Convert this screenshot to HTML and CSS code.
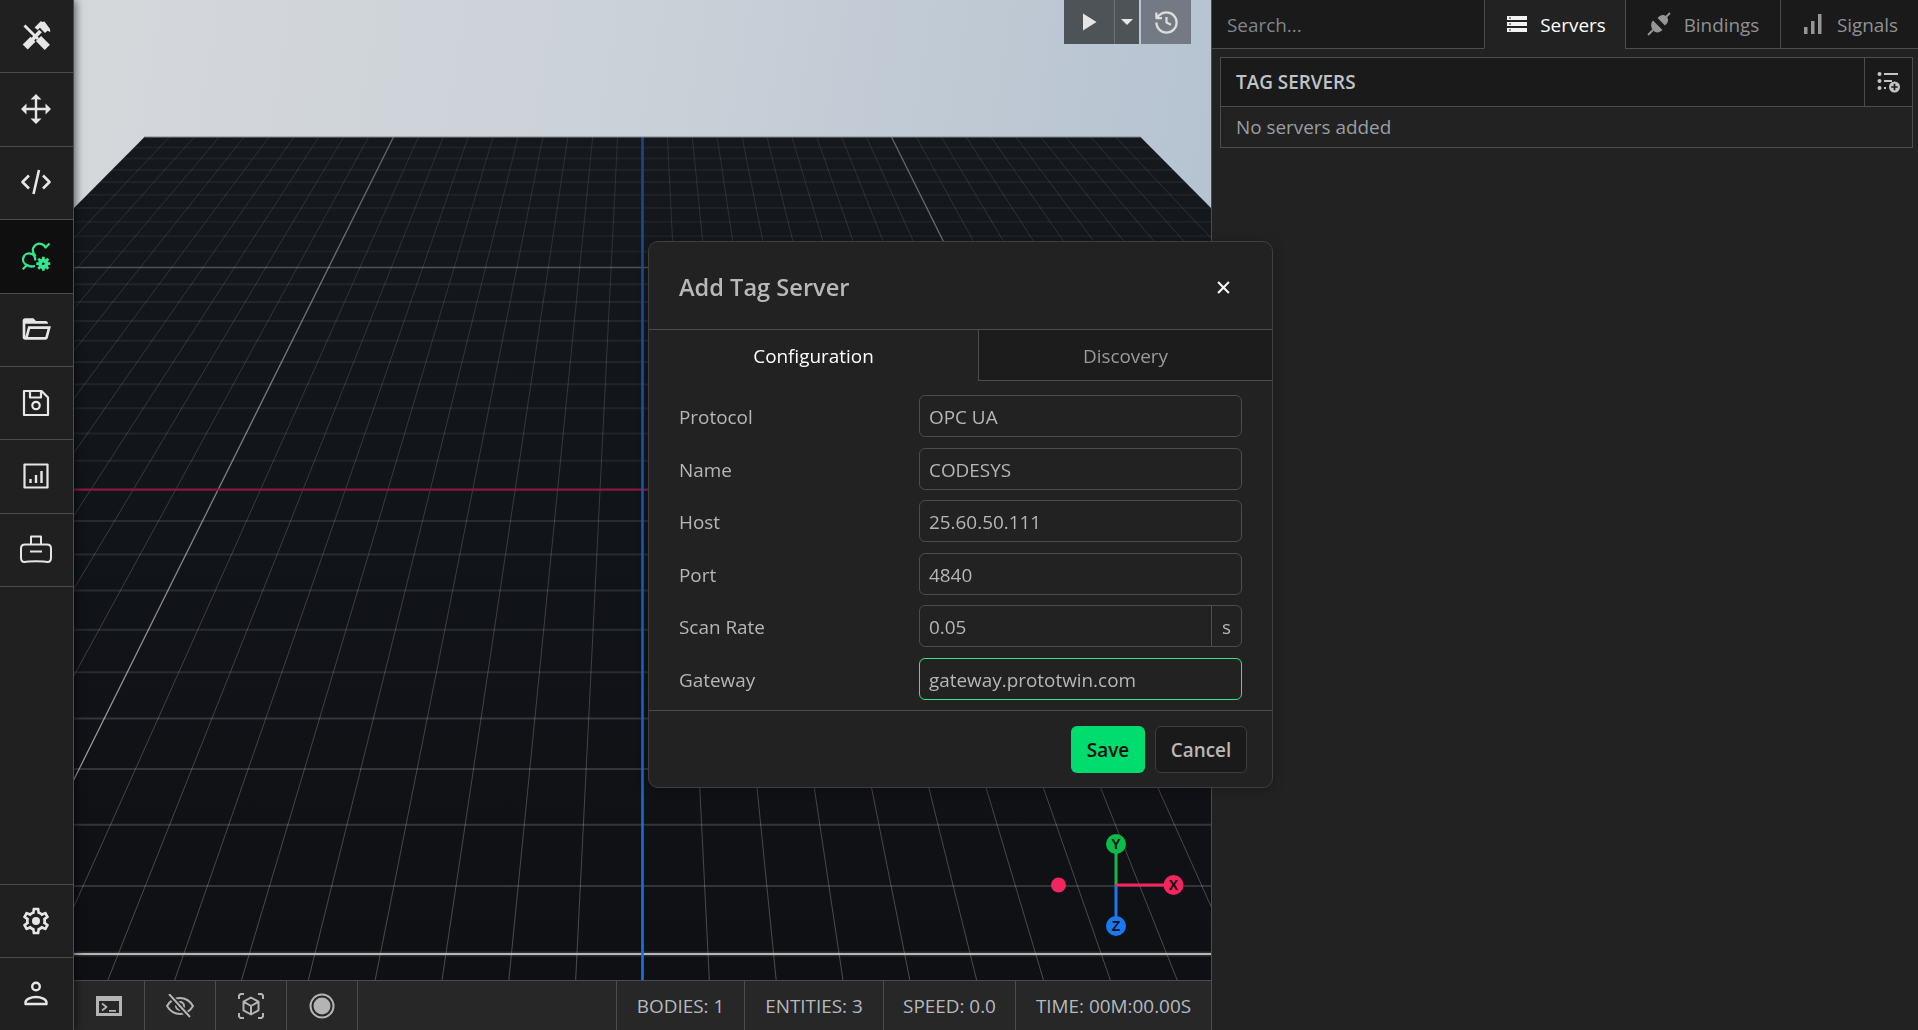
FILE: index.html
```html
<!DOCTYPE html>
<html lang="en">
<head>
<meta charset="utf-8">
<title>Add Tag Server</title>
<link rel="stylesheet" href="styles.css">
</head>
<body>
<div class="app">
  <nav class="sidebar">
    <div class="side-group">
      <div class="side-item"><svg class="ico" viewBox="0 0 32 32"><path class="st" d="M4.500 5.500 18 19" stroke-width="2.800"/><path class="st" d="m18.500 18.500 8.800 8.800" stroke-width="7.400"/><path class="st" d="m5.200 27 7.800-7.800" stroke-width="7"/><path class="st" d="m12 20 8.500-9" stroke-width="3.800"/><path class="fl" d="m14.500 7.500 6.500-6.500 1 1 2.500-.5 5.500 7.500.3 3-2.800-1.200-2.500 2.200-3.500-3.500-1.500-1.700L17.500 10z"/></svg></div>
      <div class="side-item"><svg class="ico" viewBox="0 0 32 32"><path class="st" d="M16 3v26M3 16h26" stroke-width="2.400"/><path class="fl" d="m16 1 5.500 5.500h-3.500l-2-1-2 1h-3.500zM16 31l5.500-5.500h-3.500l-2 1-2-1h-3.500zM1 16l5.500-5.500v3.500l-1 2 1 2v3.500zM31 16l-5.500-5.500v3.500l1 2-1 2v3.500z"/></svg></div>
      <div class="side-item"><svg class="ico" viewBox="0 0 32 32"><path class="st" d="M9 9.500 2.500 16 9 22.500M23 9.500 29.500 16 23 22.500M19 4 13.500 28" stroke-width="2.600"/></svg></div>
      <div class="side-item active"><svg class="ico" viewBox="0 0 32 32"><path class="st" d="M29.500 3.500 25.500 7.500A6.600 6.600 0 0 0 13.500 13L15.500 16.500M2.700 29.300 7 25A6 6 0 1 1 15 20.500M7 25c2 1.500 5 1.800 8 1" stroke-width="2.300"/><circle class="fl" cx="23.300" cy="23.700" r="5.200"/><path class="st" d="M23.300 16.700v14M16.300 23.700h14M18.300 18.700l10 10M28.300 18.700l-10 10" stroke-width="2.800"/><circle class="hole" cx="23.300" cy="23.700" r="1.300"/></svg></div>
      <div class="side-item"><svg class="ico" viewBox="0 0 24 24"><path class="fl" d="M6.100 10 4 18V8h17a2 2 0 0 0-2-2h-7l-2-2H4a2 2 0 0 0-2 2v12a2 2 0 0 0 2 2h15c.9 0 1.700-.6 1.900-1.500L23.200 10H6.100M19 18H6l1.600-6h13L19 18z"/></svg></div>
      <div class="side-item"><svg class="ico" viewBox="0 0 32 32"><path class="st" d="M4 4h17.500L28 10.500V28H4zM10 4.500v6h11v-6" stroke-width="2.200"/><circle class="st" cx="16" cy="18.500" r="3.700" stroke-width="2.200"/></svg></div>
      <div class="side-item"><svg class="ico" viewBox="0 0 32 32"><path class="st" d="M4.500 4.500h23v23h-23z" stroke-width="2.200"/><path class="st" d="M10.500 19v4M16 15v8M21.500 11v12" stroke-width="2.400"/></svg></div>
      <div class="side-item"><svg class="ico" viewBox="0 0 32 32"><path class="st" d="M11 11V3.500h10V11M5 11.500h22c2.500 0 4 1.500 4 4v9c0 3-1.500 4.500-3.500 4.500-3.500-1-19.500-1-23 0C2.500 29 1 27.500 1 24.500v-9c0-2.500 1.500-4 4-4zM10 18.500h12" stroke-width="2"/></svg></div>
    </div>
    <div class="side-group">
      <div class="side-item first"><svg class="ico" viewBox="0 0 24 24"><path class="fl" d="M10 22c-.25 0-.46-.18-.5-.42l-.37-2.650c-.63-.25-1.170-.59-1.690-.99l-2.490 1.010c-.22.08-.49 0-.61-.22l-2-3.460c-.13-.22-.07-.49.12-.64L4.570 12.970 4.500 12l.07-1-2.110-1.630c-.19-.15-.25-.42-.12-.64l2-3.460c.12-.22.39-.31.61-.22l2.490 1c.52-.39 1.060-.73 1.690-.98L9.500 2.420c.04-.24.25-.42.5-.42h4c.25 0 .46.18.5.42l.37 2.650c.63.25 1.170.59 1.690.98l2.490-1c.22-.09.49 0 .61.22l2 3.460c.13.22.07.49-.12.64L19.430 11l.07 1-.07 1 2.110 1.630c.19.15.25.42.12.64l-2 3.460c-.12.22-.39.31-.61.22l-2.490-1c-.52.39-1.060.73-1.690.98l-.37 2.650c-.04.24-.25.42-.5.42h-4M11.250 4l-.37 2.610c-1.200.25-2.260.89-3.030 1.780L5.440 7.350l-.75 1.300L6.800 10.200c-.4 1.170-.4 2.440 0 3.600l-2.120 1.560.75 1.300 2.430-1.040c.77.880 1.820 1.520 3.010 1.760l.37 2.620h1.520l.37-2.610c1.190-.25 2.240-.89 3.010-1.770l2.430 1.040.75-1.300-2.120-1.550c.4-1.170.4-2.440 0-3.610l2.110-1.550-.75-1.300-2.410 1.040c-.77-.89-1.830-1.530-3.030-1.770L12.750 4h-1.500z"/><circle class="fl" cx="12" cy="12" r="3"/></svg></div>
      <div class="side-item last"><svg class="ico" viewBox="0 0 32 32"><circle class="st" cx="16" cy="8.500" r="3.800" stroke-width="2.400"/><path class="st" d="M5.500 24.500c0-3 5-5.500 10.500-5.500s10.500 2.500 10.500 5.500v1.500h-21z" stroke-width="2.400"/></svg></div>
    </div>
  </nav>

  <main class="stage">
    <div class="viewport">
      <svg class="scene" viewBox="74 0 1137 980" preserveAspectRatio="none">
        <defs>
          <linearGradient id="floorFill" gradientUnits="userSpaceOnUse" x1="0" y1="137" x2="0" y2="980">
            <stop offset="0" stop-color="#15191e"/><stop offset=".45" stop-color="#111419"/><stop offset="1" stop-color="#0f1014"/>
          </linearGradient>
          <linearGradient id="minorV" gradientUnits="userSpaceOnUse" x1="0" y1="137" x2="0" y2="980">
            <stop offset="0" stop-color="#fff" stop-opacity=".09"/><stop offset="1" stop-color="#fff" stop-opacity=".25"/>
          </linearGradient>
          <linearGradient id="majorV" gradientUnits="userSpaceOnUse" x1="0" y1="137" x2="0" y2="980">
            <stop offset="0" stop-color="#fff" stop-opacity=".32"/><stop offset="1" stop-color="#fff" stop-opacity=".65"/>
          </linearGradient>
          <linearGradient id="blueAxis" gradientUnits="userSpaceOnUse" x1="0" y1="137" x2="0" y2="980">
            <stop offset="0" stop-color="#1a4684"/><stop offset="1" stop-color="#1a72ea"/>
          </linearGradient>
          <clipPath id="floorClip"><polygon points="144.500,137 1140.500,137 1979,980 -694,980"/></clipPath>
        </defs>
        <polygon points="144.500,137 1140.500,137 1979,980 -694,980" fill="url(#floorFill)"/>
        <g clip-path="url(#floorClip)" fill="none">
          <path stroke="#fff" stroke-opacity=".045" stroke-width="2" d="M74 147.600H1211M74 158.600H1211M74 170.100H1211M74 182.100H1211M74 194.700H1211M74 207.900H1211M74 221.700H1211M74 236.200H1211M74 251.400H1211"/>
          <path stroke="#fff" stroke-opacity=".065" stroke-width="2" d="M74 284.300H1211M74 302.100H1211M74 320.900H1211M74 340.800H1211M74 361.900H1211M74 384.300H1211M74 408.200H1211M74 433.600H1211M74 460.700H1211"/>
          <path stroke="#fff" stroke-opacity=".1" stroke-width="2" d="M74 520.900H1211M74 554.400H1211M74 590.600H1211M74 629.700H1211M74 672.200H1211"/>
          <path stroke="#fff" stroke-opacity=".15" stroke-width="2" d="M74 718.500H1211M74 769.100H1211M74 824.700H1211M74 886H1211"/>
          <path stroke="url(#minorV)" stroke-width="1" d="M617.600 137 575.670 980M592.700 137 508.840 980M567.800 137 442.010 980M542.900 137 375.180 980M518 137 308.350 980M493.100 137 241.520 980M468.200 137 174.690 980M443.300 137 107.860 980M418.400 137 41.030 980M368.600 137-92.630 980M343.700 137-159.460 980M318.800 137-226.290 980M293.900 137-293.120 980M269 137-359.950 980M244.100 137-426.780 980M219.200 137-493.610 980M194.300 137-560.440 980M169.400 137-627.270 980M667.400 137 709.330 980M692.300 137 776.160 980M717.200 137 842.990 980M742.100 137 909.820 980M767 137 976.650 980M791.900 137 1043.480 980M816.800 137 1110.310 980M841.700 137 1177.140 980M866.600 137 1243.970 980M916.400 137 1377.630 980M941.300 137 1444.460 980M966.200 137 1511.290 980M991.100 137 1578.120 980M1016 137 1644.950 980M1040.900 137 1711.780 980M1065.800 137 1778.610 980M1090.700 137 1845.440 980M1115.600 137 1912.270 980"/>
          <path stroke="url(#majorV)" stroke-width="1.300" d="M393.500 137-25.800 980M891.500 137 1310.800 980"/>
          <path stroke="#fff" stroke-opacity=".25" stroke-width="1.500" d="M74 267.400H1211"/>
          <path stroke="#88193c" stroke-width="2.200" d="M74 489.700H1211"/>
          <path stroke="#fff" stroke-opacity=".12" stroke-width="5" d="M74 954H1211"/>
          <path stroke="#b6b6b6" stroke-width="2" d="M74 954H1211"/>
          <path stroke="url(#blueAxis)" stroke-width="2.600" d="M642.500 137V980"/>
        </g>
        <path class="horizon" d="M144.500 137H1140.500"/>
        <g class="gizmo">
          <path class="gz-g" d="M1116 844V885"/>
          <path class="gz-b" d="M1116 885V926"/>
          <path class="gz-r" d="M1116 885H1173"/>
          <circle class="gz-rf" cx="1058.500" cy="885" r="7.500"/>
          <circle class="gz-gf" cx="1116" cy="844" r="10"/>
          <circle class="gz-rf" cx="1173.500" cy="885" r="10"/>
          <circle class="gz-bf" cx="1116" cy="926" r="10"/>
          <text x="1116" y="849">Y</text>
          <text x="1173.500" y="890">X</text>
          <text x="1116" y="931">Z</text>
        </g>
      </svg>
      <div class="run-controls">
        <div class="run-group">
          <button class="run-play"><svg viewBox="0 0 20 20" width="20" height="20"><path class="fl" d="M4 1.500 17.500 10 4 18.500z"/></svg></button>
          <button class="run-menu"><svg viewBox="0 0 14 8" width="14" height="8"><path class="fl" d="M1 1h12L7 7z"/></svg></button>
        </div>
        <button class="run-history"><svg viewBox="0 0 24 24" width="27" height="27"><path class="st" stroke-width="2" d="M3 12a9 9 0 1 0 9-9 9.750 9.750 0 0 0-6.740 2.740L3 8M3 3v5h5M12 7v5l4 2"/></svg></button>
      </div>
    </div>

    <footer class="statusbar">
      <div class="tool"><svg viewBox="0 0 26 20" width="26" height="20"><path class="tfill" d="M0 0h26v20H0zM3 5v12h20V5z" fill-rule="evenodd"/><path class="st" stroke-width="1.800" d="m6 7.500 4.500 3.500L6 14.500M13 14.800h7"/></svg></div>
      <div class="tool"><svg viewBox="0 0 28 24" width="28" height="24"><path class="st" stroke-width="2" d="M1 12c3-5 8-8 13-8s10 3 13 8c-3 5-8 8-13 8s-10-3-13-8z"/><circle class="st" stroke-width="2" cx="14" cy="12" r="4"/><path class="cut" d="M3 0 24 24"/><path class="st" stroke-width="2" d="M3 0 24 23"/></svg></div>
      <div class="tool"><svg viewBox="0 0 26 26" width="26" height="26"><path class="st" stroke-width="2" d="M1 6V2.500L2.500 1H6M20 1h3.500L25 2.500V6M25 20v3.500L23.500 25H20M6 25H2.500L1 23.500V20M13 4.500l7.500 4.200v8.600L13 21.500l-7.500-4.200V8.700zM5.500 8.700 13 13l7.500-4.300M13 13v8.500"/></svg></div>
      <div class="tool"><svg viewBox="0 0 26 26" width="26" height="26"><circle class="st" stroke-width="2" cx="13" cy="13" r="11.500"/><circle class="fl" cx="13" cy="13" r="8.500"/></svg></div>
      <div class="tool-rest"></div>
      <div class="stat stat-a">BODIES: 1</div>
      <div class="stat stat-b">ENTITIES: 3</div>
      <div class="stat stat-c">SPEED: 0.0</div>
      <div class="stat stat-d">TIME: 00M:00.00S</div>
    </footer>
  </main>

  <aside class="panel">
    <div class="panel-top">
      <input class="search" type="text" placeholder="Search...">
      <div class="ptab ptab-servers on"><svg viewBox="0 0 20 16" width="20" height="16"><path class="fl" d="M0 0h20v4H0zM0 6h20v4H0zM0 12h20v4H0z"/><path class="dots" d="M2 1.500h2v1H2zM2 7.500h2v1H2zM2 13.500h2v1H2z"/></svg><span>Servers</span></div>
      <div class="ptab ptab-bindings"><svg viewBox="0 0 24 24" width="24" height="24"><path class="fl" d="m6 8.500 9.500 9.500c-3 3-6.500 3.200-9 .8S3 11.500 6 8.500zM10.500 6c3-3.500 6.500-3.800 9-1.500s2 6-1.500 9z"/><path class="st" stroke-width="1.800" d="m1 23 5-5M18 6l5-5"/></svg><span>Bindings</span></div>
      <div class="ptab ptab-signals"><svg viewBox="0 0 18 20" width="18" height="20"><path class="fl" d="M0 13h3.500v7H0zM7 7h3.500v13H7zM14 0h3.500v20H14z"/></svg><span>Signals</span></div>
    </div>
    <section class="servers">
      <header class="servers-head">
        <h2>TAG SERVERS</h2>
        <div class="servers-add"><svg viewBox="0 0 24 22" width="24" height="22"><circle class="fl" cx="2.500" cy="3" r="2"/><circle class="fl" cx="2.500" cy="10" r="2"/><circle class="fl" cx="2.500" cy="17" r="2"/><path class="st" stroke-width="2" d="M7 3h14M7 10h8M7 17h2"/><circle class="fl" cx="17.500" cy="16" r="5.500"/><path class="plus" d="M17.500 12.800v6.400M14.300 16h6.400"/></svg></div>
      </header>
      <div class="servers-empty">No servers added</div>
    </section>
  </aside>
</div>

<div class="overlay">
  <div class="dialog">
    <header class="dialog-head">
      <h1>Add Tag Server</h1>
      <svg class="dialog-close" viewBox="0 0 12 12" width="13" height="13"><path d="M1 1l10 10M11 1 1 11"/></svg>
    </header>
    <div class="dialog-tabs">
      <div class="dtab dtab-on">Configuration</div>
      <div class="dtab dtab-off">Discovery</div>
    </div>
    <form class="dialog-body">
      <label class="field"><span class="lbl">Protocol</span><input class="inp" value="OPC UA"></label>
      <label class="field"><span class="lbl">Name</span><input class="inp" value="CODESYS"></label>
      <label class="field"><span class="lbl">Host</span><input class="inp" value="25.60.50.111"></label>
      <label class="field"><span class="lbl">Port</span><input class="inp" value="4840"></label>
      <label class="field"><span class="lbl">Scan Rate</span><span class="inp-group"><input class="inp-bare" value="0.05"><span class="suffix">s</span></span></label>
      <label class="field"><span class="lbl">Gateway</span><input class="inp inp-focus" value="gateway.prototwin.com"></label>
    </form>
    <footer class="dialog-foot">
      <button class="btn btn-save">Save</button>
      <button class="btn btn-cancel">Cancel</button>
    </footer>
  </div>
</div>
</body>
</html>
```
FILE: styles.css
```css
* { box-sizing: border-box; }
html, body { margin: 0; height: 100%; overflow: hidden; }
body { font-family: "Open Sans", "Noto Sans", sans-serif; font-size: 18.9px; color: #b6b6b6; background: #222; }
button, input { font: inherit; color: inherit; }
h1, h2 { margin: 0; }

.st { fill: none; stroke: currentColor; stroke-linecap: butt; stroke-linejoin: round; }
.fl { fill: currentColor; }
.hole { fill: #0f0f0f; }

.app { display: flex; height: 1030px; }

.sidebar { flex: 0 0 74px; height: 100%; display: flex; flex-direction: column; justify-content: space-between; background: #202020; border-right: 1px solid #4c4c4c; box-shadow: 2px 0 8px rgba(0,0,0,.55); position: relative; z-index: 2; color: #e6e6e6; }
.side-item { height: 73.4px; display: flex; align-items: center; justify-content: center; padding: 0 1px 1px 0; border-bottom: 1px solid #4c4c4c; }
.side-item.active { background: #0f0f0f; color: #34e68d; }
.side-item.first { height: 74px; border-top: 1px solid #4c4c4c; }
.side-item.last { height: 72px; border-bottom: 0; }
.ico { width: 32px; height: 32px; display: block; }

.stage { flex: 0 0 1137px; display: flex; flex-direction: column; }
.viewport { flex: 0 0 980px; position: relative; overflow: hidden; background: linear-gradient(100deg, #d5d8db 0%, #ccd2d9 40%, #b1c0cf 100%); }
.scene { display: block; width: 100%; height: 100%; }
.horizon { stroke: #7f858b; stroke-width: 1; fill: none; }

.gizmo path { fill: none; stroke-width: 3; }
.gz-g { stroke: #0dbb49; }
.gz-b { stroke: #1a78f2; }
.gz-r { stroke: #f2255f; }
.gz-gf { fill: #0dbb49; }
.gz-bf { fill: #1a78f2; }
.gz-rf { fill: #f2255f; }
.gizmo text { font-family: "Liberation Sans", sans-serif; font-weight: 700; font-size: 14px; text-anchor: middle; fill: #111; }

.run-controls { position: absolute; top: 0; right: 20px; display: flex; gap: 2px; height: 44px; }
.run-group { display: flex; }
.run-group button, .run-history { border: 0; padding: 0; display: flex; align-items: center; justify-content: center; color: #e6e6e6; height: 44px; }
.run-play { width: 51px; background: #4e5357; border-right: 1px solid #6d7175 !important; }
.run-menu { width: 24px; background: #4e5357; }
.run-history { width: 50px; background: #737a83; color: #dcdcdc; }

.statusbar { flex: 0 0 50px; display: flex; background: #272727; border-top: 1px solid #4c4c4c; color: #b4b4b4; }
.tool { flex: 0 0 71px; display: flex; align-items: center; justify-content: center; border-right: 1px solid #4c4c4c; }
.tfill { fill: currentColor; }
.cut { stroke: #272727; stroke-width: 5; fill: none; }
.tool-rest { flex: 1; }
.stat { display: flex; align-items: center; justify-content: center; border-left: 1px solid #4c4c4c; white-space: nowrap; padding-top: 1px; color: #b4bac0; }
.stat-a { flex: 0 0 128px; }
.stat-b { flex: 0 0 139px; }
.stat-c { flex: 0 0 132px; }
.stat-d { flex: 0 0 196px; }

.panel { flex: 1; min-width: 0; background: #222; border-left: 1px solid #4c4c4c; }
.panel-top { display: flex; height: 49px; }
.search { flex: 1; min-width: 0; background: #1a1a1a; border: 0; border-bottom: 1px solid #4c4c4c; padding: 1px 15px 0; outline: 0; }
.search::placeholder { color: #80868c; opacity: 1; }
.ptab { display: flex; align-items: center; justify-content: center; gap: 13px; background: #1a1a1a; border-bottom: 1px solid #4c4c4c; border-left: 1px solid #4c4c4c; color: #8e9296; }
.ptab span { padding-top: 1px; }
.ptab-servers { flex: 0 0 141px; padding-left: 3px; }
.ptab-bindings { flex: 0 0 155px; }
.ptab-signals { flex: 0 0 138px; padding-left: 3px; gap: 15px; }
.ptab.on { background: #222; color: #fff; border-bottom-color: #222; }
.ptab svg { color: #969696; }
.ptab.on svg { color: #f2f2f2; }
.dots { fill: #222; }

.servers { margin: 8px 5px 0 8px; border: 1px solid #4c4c4c; }
.servers-head { height: 49px; display: flex; background: #1a1a1a; border-bottom: 1px solid #4c4c4c; }
.servers-head h2 { flex: 1; font-size: 18.9px; font-weight: 600; color: #c0c4c8; padding-left: 15px; line-height: 49px; }
.servers-add { flex: 0 0 48px; border-left: 1px solid #4c4c4c; display: flex; align-items: center; justify-content: center; color: #c4c4c4; }
.plus { stroke: #1a1a1a; stroke-width: 1.700; fill: none; }
.servers-empty { height: 40px; line-height: 41px; padding-left: 15px; color: #9a9ea2; }

.overlay { position: fixed; inset: 0; z-index: 5; display: flex; justify-content: center; align-items: center; padding-left: 3px; padding-bottom: 1px; pointer-events: none; }
.dialog { width: 625px; height: 547px; display: flex; flex-direction: column; background: #222; border: 1px solid #3f3f3f; border-radius: 10px; box-shadow: 0 2px 12px rgba(0,0,0,.25); }
.dialog-head { flex: 0 0 88px; display: flex; align-items: center; justify-content: space-between; padding: 0 42px 0 30px; border-bottom: 1px solid #4c4c4c; }
.dialog-head h1 { font-size: 23.6px; font-weight: 600; color: #b8b8b8; padding-top: 2px; }
.dialog-close { stroke: #f4f4f4; stroke-width: 2; fill: none; margin-top: 3px; }
.dialog-tabs { flex: 0 0 51px; display: flex; }
.dtab { display: flex; align-items: center; justify-content: center; padding-top: 1px; }
.dtab-on { flex: 0 0 329px; color: #fff; }
.dtab-off { flex: 1; background: #1c1c1c; color: #9a9a9a; border-left: 1px solid #4c4c4c; border-bottom: 1px solid #4c4c4c; }
.dialog-body { flex: 0 0 329px; display: flex; flex-direction: column; gap: 10.6px; padding: 14px 30px 10px; }
.field { display: grid; grid-template-columns: 240px 1fr; align-items: center; height: 42px; }
.lbl { padding-top: 2px; }
.inp, .inp-group { width: 100%; height: 42px; background: #222; border: 1px solid #4c4c4c; border-radius: 6px; color: #b6b6b6; }
.inp { padding: 2px 9px 0; outline: 0; }
.inp-group { display: flex; }
.inp-bare { flex: 1; min-width: 0; background: transparent; border: 0; padding: 2px 9px 0; outline: 0; color: #b6b6b6; }
.suffix { flex: 0 0 30px; display: flex; align-items: center; justify-content: center; padding-top: 2px; border-left: 1px solid #4c4c4c; }
.inp-focus { border-color: #39e28f; }
.dialog-foot { flex: 1; display: flex; align-items: center; justify-content: flex-end; gap: 10px; padding-right: 25px; border-top: 1px solid #4c4c4c; }
.btn { height: 47px; border-radius: 6px; font-weight: 600; padding: 2px 0 0; }
.btn-save { width: 74px; background: #00dc6e; border: 0; color: #0e0e0e; }
.btn-cancel { width: 92px; background: #1a1a1a; border: 1px solid #3e3e3e; color: #b8b8b8; }
```
